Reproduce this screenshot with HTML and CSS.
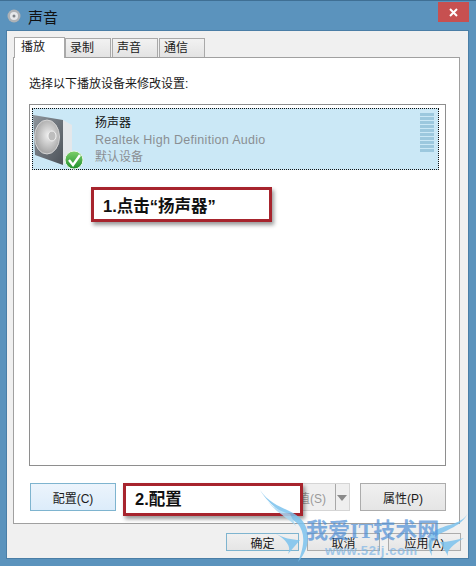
FILE: index.html
```html
<!DOCTYPE html>
<html lang="zh-CN">
<head>
  <meta charset="UTF-8" />
  <title>声音</title>
  <link rel="stylesheet" href="styles.css">
</head>
<body>
  <div class="window">
    <div class="titlebar">
      <svg class="title-icon" width="16" height="16" viewBox="0 0 16 16">
        <circle cx="7" cy="8" r="6.5" fill="#aeb2b6"/>
        <circle cx="7" cy="8" r="4" fill="#e6e8ea"/>
        <circle cx="7" cy="8" r="1.5" fill="#7d8288"/>
      </svg>
      <span class="title-text">声音</span>
      <div class="close-btn">
        <svg width="9" height="9" viewBox="0 0 9 9"><path d="M1 1L8 8M8 1L1 8" stroke="#fff" stroke-width="2"/></svg>
      </div>
    </div>

    <div class="client">
      <div class="tabs">
        <div class="tab active">播放</div>
        <div class="tab">录制</div>
        <div class="tab">声音</div>
        <div class="tab">通信</div>
      </div>

      <div class="panel">
        <p class="hint">选择以下播放设备来修改设置:</p>

        <div class="device-list">
          <div class="device selected">
            <svg class="device-icon" width="52" height="58" viewBox="0 0 52 58">
              <defs>
                <linearGradient id="cab" x1="0" y1="0" x2="1" y2="1">
                  <stop offset="0" stop-color="#8f969d"/>
                  <stop offset="1" stop-color="#4c5259"/>
                </linearGradient>
                <radialGradient id="cone" cx="0.55" cy="0.45" r="0.7">
                  <stop offset="0" stop-color="#f0f0f0"/>
                  <stop offset="1" stop-color="#8f8f8f"/>
                </radialGradient>
                <linearGradient id="green" x1="0" y1="0" x2="0" y2="1">
                  <stop offset="0" stop-color="#7fd06a"/>
                  <stop offset="1" stop-color="#1f8f2c"/>
                </linearGradient>
              </defs>
              <path d="M0 1L30 6V51L2 41Z" fill="url(#cab)"/>
              <path d="M30 6L39 11V44L30 51Z" fill="#e4e7ea"/>
              <ellipse cx="14" cy="23" rx="12.5" ry="17" fill="url(#cone)" stroke="#d6d6d6"/>
              <ellipse cx="19" cy="22" rx="4" ry="5" fill="#bdbdbd" stroke="#f2f2f2"/>
              <circle cx="41" cy="46" r="9" fill="url(#green)" stroke="#e8f5e6"/>
              <path d="M36 46L40 51L47 41" fill="none" stroke="#fff" stroke-width="2.4"/>
            </svg>
            <div class="device-text">
              <div class="device-name">扬声器</div>
              <div class="device-sub latin">Realtek High Definition Audio</div>
              <div class="device-sub">默认设备</div>
            </div>
            <div class="meter"></div>
          </div>
        </div>

        <div class="panel-buttons">
          <div class="btn btn-config">配置(C)</div>
          <div class="split-btn">
            <span class="split-label">设为默认值(S)</span>
            <span class="split-arrow"></span>
          </div>
          <div class="btn btn-props">属性(P)</div>
        </div>
      </div>

      <div class="footer">
        <div class="btn btn-small btn-ok">确定</div>
        <div class="btn btn-small">取消</div>
        <div class="btn btn-small">应用(A)</div>
      </div>
    </div>

    <!-- annotations drawn on the screenshot -->
    <div class="note note-one">1.点击“扬声器”</div>
    <div class="note note-two">2.配置</div>

    <!-- watermark -->
    <div class="watermark">
      <svg class="wings" width="226" height="86" viewBox="0 0 226 86">
        <path d="M10 10C22 30 40 36 48 44C54 52 56 62 48 82C62 66 60 48 50 38C40 28 22 28 10 10Z" fill="#7cc3ee"/>
        <path d="M18 22C28 34 38 38 46 46L40 34C32 32 24 28 18 22Z" fill="#a9daf5"/>
        <path d="M25 53C33 58 42 60 50 60L38 74C42 66 36 60 25 53Z" fill="#7cc3ee"/>
        <path d="M218 33C212 46 196 50 186 56C182 60 181 68 182 76C176 66 178 56 186 50C198 44 212 44 218 33Z" fill="#7cc3ee"/>
        <path d="M214 58C206 60 198 62 190 62L198 76C196 70 204 64 214 58Z" fill="#7cc3ee"/>
      </svg>
      <div class="wm-title">我爱IT技术网</div>
      <div class="wm-url">www.52ij.com</div>
    </div>
  </div>
</body>
</html>
```

FILE: styles.css
```css
* {
  box-sizing: border-box;
}

body {
  margin: 0;
  font-family: "Liberation Sans", "Noto Sans CJK SC", sans-serif;
  font-size: 13px;
  color: #1a1a1a;
}

.window {
  position: relative;
  width: 476px;
  height: 566px;
  overflow: hidden;
  background-color: #5b93bd;
  display: flex;
  flex-direction: column;
  border-top: 1px solid #3f6f94;
}

.titlebar {
  height: 30px;
  flex-shrink: 0;
  display: flex;
  align-items: center;
  padding-left: 7px;
  position: relative;
}

.title-icon {
  margin-right: 5px;
}

.title-text {
  font-size: 15px;
  color: #111;
}

.close-btn {
  position: absolute;
  top: 1px;
  left: 438px;
  width: 31px;
  height: 20px;
  background-color: #c75050;
  display: flex;
  align-items: center;
  justify-content: center;
}

.client {
  margin: 0 8px 8px 7px;
  flex: 1;
  background-color: #f0f0f0;
  padding: 6px 8px 0 6px;
  display: flex;
  flex-direction: column;
  outline: 1px solid #4a7ea6;
}

.tabs {
  display: flex;
  align-items: flex-end;
  height: 20px;
  padding-left: 1px;
  position: relative;
  z-index: 1;
}

.tab {
  width: 46px;
  height: 19px;
  margin-right: 1px;
  padding-left: 4px;
  font-size: 12px;
  line-height: 19px;
  background: linear-gradient(#f2f2f2, #e3e3e3);
  border: 1px solid #a9a9a9;
  border-bottom: none;
}

.tab.active {
  width: 51px;
  height: 21px;
  margin-right: 0;
  padding-left: 6px;
  background: #fff;
  margin-bottom: -1px;
  line-height: 18px;
}

.panel {
  height: 467px;
  background-color: #fff;
  border: 1px solid #a0a0a0;
  padding: 17px 13px 0 15px;
  display: flex;
  flex-direction: column;
}

.hint {
  margin: 0;
  height: 29px;
  font-size: 12px;
  line-height: 18px;
}

.device-list {
  height: 362px;
  border: 1px solid #8e8e8e;
  padding: 3px 6px 0 2px;
}

.device {
  height: 62px;
  display: flex;
  position: relative;
}

.device.selected {
  background-color: #cbe8f6;
  border: 1px dotted #111;
}

.device-icon {
  margin-top: 5px;
  flex-shrink: 0;
}

.device-text {
  margin-left: 10px;
  padding-top: 6px;
  font-size: 12px;
  line-height: 17px;
}

.device-name {
  color: #111;
}

.device-sub {
  color: #8a8f93;
}

.latin {
  font-size: 12.5px;
  letter-spacing: 0.3px;
}

.meter {
  position: absolute;
  top: 4px;
  right: 4px;
  width: 14px;
  height: 39px;
  background: repeating-linear-gradient(#9cc8de 0 3px, #cbe8f6 3px 4px);
}

.panel-buttons {
  display: flex;
  margin-top: 17px;
  padding-left: 1px;
  height: 28px;
}

.btn {
  border: 1px solid #acacac;
  background: linear-gradient(#f0f0f0, #e5e5e5);
  display: flex;
  align-items: center;
  justify-content: center;
  font-size: 12px;
}

.btn-config {
  width: 86px;
  background: linear-gradient(#ecf4fc, #dcecfa);
  border-color: #7eb4cf;
}

.btn-props {
  width: 86px;
  margin-left: 10px;
}

.split-btn {
  margin-left: auto;
  width: 160px;
  display: flex;
  align-items: center;
  justify-content: flex-end;
  border: 1px solid #d5d5d5;
  background-color: #efefef;
  font-size: 12px;
  color: #9a9a9a;
}

.split-label {
  padding-right: 9px;
}

.split-arrow {
  width: 14px;
  height: 100%;
  border-left: 1px solid #a8a8a8;
  position: relative;
}

.split-arrow::after {
  content: "";
  position: absolute;
  left: 1px;
  top: 11px;
  border: 5px solid transparent;
  border-top: 6px solid #8a8a8a;
  border-bottom: none;
}

.footer {
  display: flex;
  justify-content: flex-end;
  gap: 8px;
  margin-top: 9px;
  margin-right: -1px;
}

.btn-small {
  width: 73px;
  height: 18px;
}

.btn-ok {
  border-color: #7eb4cf;
}

.note {
  position: absolute;
  background-color: #fff;
  border: 3px solid #a7242d;
  box-shadow: 2px 3px 4px rgba(0, 0, 0, 0.4);
  font-size: 16.5px;
  font-weight: bold;
  color: #111;
  display: flex;
  align-items: center;
}

.note-one {
  left: 91px;
  top: 186px;
  width: 181px;
  height: 35px;
  padding-left: 9px;
}

.note-two {
  left: 123px;
  top: 482px;
  width: 180px;
  height: 33px;
  padding: 0 0 3px 9px;
}

.watermark {
  position: absolute;
  left: 250px;
  top: 479px;
  width: 226px;
  height: 86px;
  pointer-events: none;
}

.wings {
  position: absolute;
  left: 0;
  top: 0;
  opacity: 0.85;
}

.wm-title {
  position: absolute;
  left: 56px;
  top: 36px;
  font-family: "Liberation Serif", "Noto Sans CJK SC", serif;
  font-size: 22px;
  font-weight: bold;
  line-height: 30px;
  color: #4f8fd6;
  opacity: 0.7;
  white-space: nowrap;
}

.wm-url {
  position: absolute;
  left: 75px;
  top: 63px;
  font-size: 13px;
  font-weight: bold;
  line-height: 16px;
  color: #7fb6e6;
  opacity: 0.7;
  letter-spacing: 0.6px;
}
```
